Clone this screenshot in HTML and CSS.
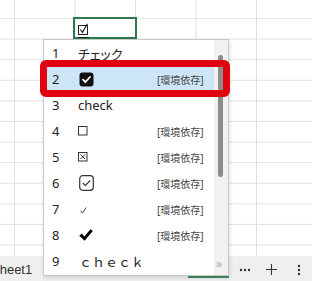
FILE: index.html
```html
<!DOCTYPE html>
<html lang="ja">

<head>
    <meta charset="UTF-8">
    <meta name="viewport" content="width=device-width, initial-scale=1.0">
    <title>チェック 変換候補</title>
    <link rel="stylesheet" href="styles.css">
</head>

<body>
    <div class="sheet">
        <!-- the cell being typed into -->
        <div class="cell-active">
            <span class="ime-text">
                <svg width="11" height="12" viewBox="0 0 11 12">
                    <rect x="0.5" y="2.5" width="9" height="9" fill="none" stroke="#222" stroke-width="1" />
                    <path d="M2.3 6.5 L4.5 9.3 L9.3 0.8" fill="none" stroke="#222" stroke-width="1.2" />
                </svg>
            </span>
        </div>

        <!-- IME candidate list -->
        <div class="candidates">
            <ul class="options">
                <li class="option">
                    <span class="num">1</span>
                    <span class="label kana">チェック</span>
                </li>
                <li class="option selected">
                    <span class="num">2</span>
                    <span class="label">
                        <svg class="sym-box-black" width="15" height="15" viewBox="0 0 15 15">
                            <rect x="0.5" y="0.5" width="14" height="14" rx="3" fill="#111" />
                            <path d="M4 7.6 L6.4 10 L11 5" fill="none" stroke="#fff" stroke-width="1.8"
                                stroke-linecap="round" stroke-linejoin="round" />
                        </svg>
                    </span>
                    <span class="tag">[環境依存]</span>
                </li>
                <li class="option">
                    <span class="num">3</span>
                    <span class="label">check</span>
                </li>
                <li class="option">
                    <span class="num">4</span>
                    <span class="label">
                        <svg width="10" height="10" viewBox="0 0 10 10">
                            <rect x="0.5" y="0.5" width="8.5" height="8.5" fill="none" stroke="#333" stroke-width="1" />
                        </svg>
                    </span>
                    <span class="tag">[環境依存]</span>
                </li>
                <li class="option">
                    <span class="num">5</span>
                    <span class="label">
                        <svg width="10" height="10" viewBox="0 0 10 10">
                            <rect x="0.5" y="0.5" width="8.5" height="8.5" fill="none" stroke="#333" stroke-width="1" />
                            <path d="M2.5 2.5 L7 7 M7 2.5 L2.5 7" stroke="#333" stroke-width="1" />
                        </svg>
                    </span>
                    <span class="tag">[環境依存]</span>
                </li>
                <li class="option">
                    <span class="num">6</span>
                    <span class="label">
                        <svg class="sym-box-round" width="15" height="16" viewBox="0 0 15 16">
                            <rect x="0.7" y="0.7" width="13.6" height="14.6" rx="3" fill="none" stroke="#333" stroke-width="1.2" />
                            <path d="M3.8 8 L6.3 10.5 L11.2 5.5" fill="none" stroke="#333" stroke-width="1.1" />
                        </svg>
                    </span>
                    <span class="tag">[環境依存]</span>
                </li>
                <li class="option">
                    <span class="num">7</span>
                    <span class="label">
                        <svg class="sym-tick" width="7" height="7" viewBox="0 0 7 7">
                            <path d="M0.6 3.8 L2.4 6.2 L6.2 0.5" fill="none" stroke="#333" stroke-width="0.9" />
                        </svg>
                    </span>
                    <span class="tag">[環境依存]</span>
                </li>
                <li class="option">
                    <span class="num">8</span>
                    <span class="label">
                        <svg class="sym-heavy" width="14" height="12" viewBox="0 0 14 12">
                            <path d="M0.2 6.8 L2.9 4.5 L5.3 7.4 L11.5 0.2 L13.8 1.9 L5.7 11.8 Z" fill="#000" />
                        </svg>
                    </span>
                    <span class="tag">[環境依存]</span>
                </li>
                <li class="option">
                    <span class="num">9</span>
                    <span class="label wide">ｃｈｅｃｋ</span>
                </li>
            </ul>
            <div class="scrollbar">
                <div class="thumb"></div>
                <span class="more">»</span>
            </div>
        </div>

        <!-- red mark drawn around candidate 2 -->
        <div class="annotation"></div>
    </div>

    <div class="tabbar">
        <div class="tab">Sheet1</div>
        <span class="tab-line"></span>
        <div class="tab-tools">
            <span class="tool">
                <svg width="12" height="4" viewBox="0 0 12 4">
                    <circle cx="2" cy="2" r="1.2" fill="#333" />
                    <circle cx="6" cy="2" r="1.2" fill="#333" />
                    <circle cx="10" cy="2" r="1.2" fill="#333" />
                </svg>
            </span>
            <span class="tool">
                <svg width="11" height="11" viewBox="0 0 11 11">
                    <path d="M5.5 0 V11 M0 5.5 H11" stroke="#333" stroke-width="1.1" />
                </svg>
            </span>
            <span class="tool">
                <svg width="4" height="12" viewBox="0 0 4 12">
                    <circle cx="2" cy="2" r="1.2" fill="#333" />
                    <circle cx="2" cy="6" r="1.2" fill="#333" />
                    <circle cx="2" cy="10" r="1.2" fill="#333" />
                </svg>
            </span>
        </div>
    </div>
</body>

</html>
```

FILE: styles.css
```css
body {
    margin: 0;
    width: 312px;
    height: 281px;
    overflow: hidden;
    background: #fff;
    font-family: "Noto Sans", "Noto Sans CJK JP", sans-serif;
    color: #222;
}

/* grid of the worksheet */
.sheet {
    position: relative;
    height: 256px;
    background-color: #fff;
    background-image:
        linear-gradient(to right, #e1e1e1 1px, transparent 1px),
        linear-gradient(to bottom, #e1e1e1 1px, transparent 1px);
    background-size: 60.5px 100%, 100% 20.6px;
    background-position: 14px 0, 0 18px;
}

.cell-active {
    position: absolute;
    left: 73px;
    top: 17px;
    width: 64px;
    height: 22px;
    box-sizing: border-box;
    border: 2px solid #2e7a50;
    padding: 2px 0 0 3px;
}

.ime-text {
    display: inline-block;
    height: 14px;
    border-bottom: 1px solid #222;

    svg {
        display: block;
    }
}

/* candidate window */
.candidates {
    position: absolute;
    z-index: 2;
    left: 43px;
    top: 39px;
    width: 186px;
    height: 237px;
    box-sizing: border-box;
    display: flex;
    background: #fff;
    border: 1px solid #c8c8c8;
    box-shadow: 1px 2px 4px rgba(0, 0, 0, 0.12);
}

.options {
    flex: 1;
    margin: 0;
    padding: 0;
    list-style: none;
}

.option {
    display: grid;
    grid-template-columns: 34px 79px auto;
    align-items: center;
    height: 26px;
    font-size: 13px;

    &.selected {
        background: #cde6f7;
    }
}

.num {
    padding-left: 8px;
    color: #222;
}

.label {
    display: flex;
    align-items: center;
    white-space: nowrap;

    svg {
        display: block;
    }

    &.kana {
        font-family: "Noto Sans CJK JP", sans-serif;
        font-feature-settings: "palt";
    }

    &.wide {
        font-family: "Noto Sans CJK JP", sans-serif;
        padding-left: 1px;
    }
}

.sym-box-black,
.sym-box-round,
.sym-heavy {
    margin-left: 1px;
}

.sym-tick {
    margin-left: 2px;
    margin-top: 2px;
}

.tag {
    font-size: 10px;
    color: #444;
    font-family: "Noto Sans", "Noto Sans CJK JP", sans-serif;
}

.scrollbar {
    width: 14px;
    background: #f1f1f1;
    display: flex;
    flex-direction: column;
    align-items: flex-start;
}

.thumb {
    margin: 15px 0 0 4px;
    width: 5px;
    height: 122px;
    border-radius: 3px;
    background: #8c8c8c;
}

.more {
    margin-top: auto;
    margin-bottom: 5px;
    margin-left: 2px;
    font-size: 12px;
    line-height: 12px;
    color: #aaa;
}

.annotation {
    position: absolute;
    z-index: 3;
    left: 40px;
    top: 60px;
    width: 190px;
    height: 37px;
    box-sizing: border-box;
    border: 7px solid #e1000f;
    border-radius: 6px;
}

/* sheet tabs */
.tabbar {
    position: relative;
    height: 25px;
    display: flex;
    align-items: center;
    background: #efefef;
}

.tab {
    margin-left: -9px;
    margin-top: 2px;
    font-size: 13px;
    color: #333;
    font-family: "Liberation Sans", sans-serif;
}

.tab-line {
    position: absolute;
    left: 188px;
    bottom: 3px;
    width: 41px;
    height: 2px;
    background: #3f8a60;
}

.tab-tools {
    margin-left: auto;
    display: flex;
    margin-top: 2px;
}

.tool {
    width: 27px;
    height: 20px;
    display: flex;
    align-items: center;
    justify-content: center;
}
```
